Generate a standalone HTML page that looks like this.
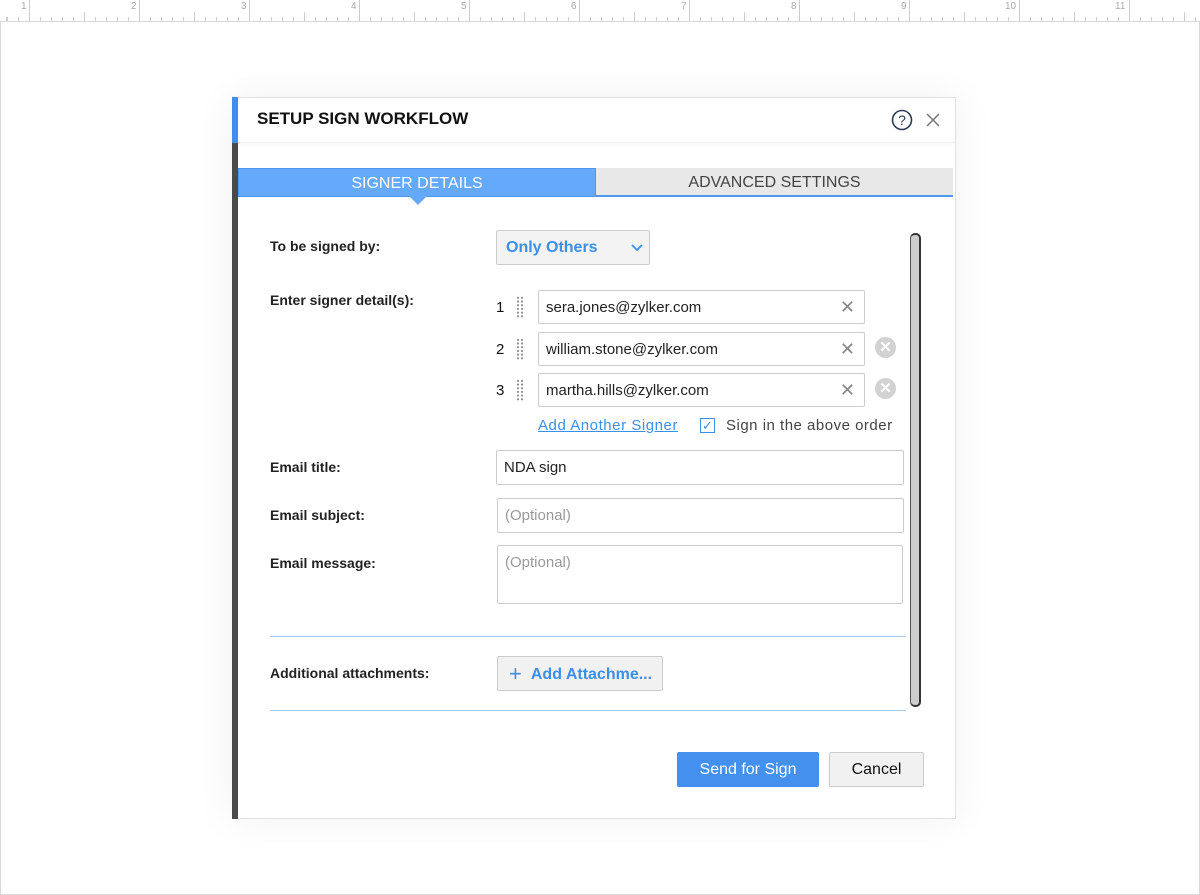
<!DOCTYPE html>
<html><head><style>
*{box-sizing:border-box;margin:0;padding:0}
body{width:1200px;height:895px;background:#fff;font-family:"Liberation Sans",sans-serif;position:relative;overflow:hidden}
.ruler{position:absolute;left:0;top:0;width:1200px;height:22px;background:#fff;border-bottom:1px solid #d8d8d8;
background-image:repeating-linear-gradient(90deg,#ccc 0 1px,transparent 1px 110px),
repeating-linear-gradient(90deg,#ccc 0 1px,transparent 1px 11px),
repeating-linear-gradient(90deg,#ccc 0 1px,transparent 1px 55px);
background-size:100% 22px,100% 5px,100% 10px;background-position:29px 0,7px 17px,29px 12px;background-repeat:repeat-x}
.rn{position:absolute;top:1px;font-size:10px;color:#aaa}
.frame{position:absolute;left:0;top:22px;width:1200px;height:873px;border:1px solid #d8d8d8;border-top:none}
.dlg{position:absolute;left:232px;top:97px;width:724px;height:722px;background:#fff;border:1px solid #e2e2e2;box-shadow:0 0 40px rgba(0,0,0,.06)}
.bar{position:absolute;left:232px;top:97px;width:6px;height:722px;background:#4a4a4a}
.bar:before{content:"";position:absolute;left:0;top:0;width:6px;height:46px;background:#3d8ef0}
.hdr{position:absolute;left:238px;top:97px;width:717px;height:46px;border-bottom:1px solid #eee;box-shadow:0 2px 4px rgba(0,0,0,.03)}
.title{position:absolute;left:257px;top:109px;font-size:17px;font-weight:bold;color:#111}
.tab{position:absolute;top:168px;height:29px;font-size:16px;text-align:center;line-height:29px}
.lbl{position:absolute;left:270px;font-size:14px;font-weight:bold;color:#222}
.inp{position:absolute;border:1px solid #ccc;border-radius:2px;background:#fff;font-size:15px;color:#222;padding-left:7px;line-height:33px}
.x{position:absolute;right:9px;top:0;color:#888;font-size:18px}
.num{position:absolute;left:496px;font-size:15px;color:#111}
.dots{position:absolute;left:516px;width:8px;height:22px;background-image:radial-gradient(circle,#888 0.9px,transparent 1.2px);background-size:4px 3.7px}
.rm{position:absolute;left:875px;width:21px;height:21px;border-radius:50%;background:#d2d2d2;color:#fff;text-align:center;line-height:22px;font-size:15px;font-weight:bold}
.hr{position:absolute;left:270px;width:636px;height:1px;background:#a9cbf3}
.btn{position:absolute;border-radius:2px;font-size:16px;text-align:center}
</style></head><body>
<div class="ruler"></div>
<span class="rn" style="left:21px">1</span><span class="rn" style="left:131px">2</span><span class="rn" style="left:241px">3</span><span class="rn" style="left:351px">4</span><span class="rn" style="left:461px">5</span><span class="rn" style="left:571px">6</span><span class="rn" style="left:681px">7</span><span class="rn" style="left:791px">8</span><span class="rn" style="left:901px">9</span><span class="rn" style="left:1005px">10</span><span class="rn" style="left:1115px">11</span>
<div class="frame"></div>
<div class="dlg"></div>
<div class="hdr"></div>
<div class="bar"></div>
<div class="title">SETUP SIGN WORKFLOW</div>
<svg style="position:absolute;left:890px;top:108px" width="24" height="24" viewBox="0 0 24 24"><circle cx="12" cy="12" r="9.5" fill="none" stroke="#2b3a55" stroke-width="1.6"/><text x="12" y="17" text-anchor="middle" font-size="14" font-family="Liberation Sans" fill="#2b3a55">?</text></svg>
<svg style="position:absolute;left:926px;top:113px" width="14" height="14"><path d="M1 1L13 13M13 1L1 13" stroke="#777" stroke-width="1.5"/></svg>
<div class="tab" style="left:238px;width:358px;background:#64a9fa;color:#fff;border:1px solid #4d97ef">SIGNER DETAILS</div>
<div class="tab" style="left:596px;width:357px;background:#e8e8e8;color:#444;border-bottom:2px solid #4d97ef">ADVANCED SETTINGS</div>
<div style="position:absolute;left:409px;top:196px;width:0;height:0;border-left:9px solid transparent;border-right:9px solid transparent;border-top:9px solid #64a9fa"></div>
<div style="position:absolute;left:910px;top:233px;width:11px;height:474px;background:#cdcdcd;border:2px solid #333;border-radius:5px;border-left:1px solid #555"></div>

<div class="lbl" style="top:238px">To be signed by:</div>
<div class="inp" style="left:496px;top:230px;width:154px;height:35px;background:#f3f3f3;color:#3b8fe8;font-weight:bold;font-size:16px;padding-left:9px;line-height:34px">Only Others
<svg style="position:absolute;right:6px;top:13px" width="12" height="8"><path d="M1 1L6 6L11 1" stroke="#3b8fe8" stroke-width="1.8" fill="none"/></svg></div>

<div class="lbl" style="top:292px">Enter signer detail(s):</div>
<div class="num" style="top:299px">1</div><div class="dots" style="top:296px"></div>
<div class="inp" style="left:538px;top:290px;width:327px;height:34px">sera.jones@zylker.com<span class="x">✕</span></div>
<div class="num" style="top:341px">2</div><div class="dots" style="top:338px"></div>
<div class="inp" style="left:538px;top:332px;width:327px;height:34px">william.stone@zylker.com<span class="x">✕</span></div>
<div class="rm" style="top:337px">✕</div>
<div class="num" style="top:382px">3</div><div class="dots" style="top:379px"></div>
<div class="inp" style="left:538px;top:373px;width:327px;height:34px">martha.hills@zylker.com<span class="x">✕</span></div>
<div class="rm" style="top:378px">✕</div>
<div style="position:absolute;left:538px;top:417px;font-size:15px;color:#3b8fe8;text-decoration:underline;letter-spacing:0.55px">Add Another Signer</div>
<div style="position:absolute;left:700px;top:418px;width:15px;height:15px;border:1px solid #3b8fe8;color:#3b8fe8;font-size:13px;line-height:13px;text-align:center">✓</div>
<div style="position:absolute;left:726px;top:417px;font-size:15px;color:#444;letter-spacing:0.5px">Sign in the above order</div>

<div class="lbl" style="top:459px">Email title:</div>
<div class="inp" style="left:496px;top:450px;width:408px;height:35px;line-height:34px">NDA sign</div>
<div class="lbl" style="top:507px">Email subject:</div>
<div class="inp" style="left:497px;top:498px;width:407px;height:35px;color:#999;line-height:34px">(Optional)</div>
<div class="lbl" style="top:555px">Email message:</div>
<div class="inp" style="left:497px;top:545px;width:406px;height:59px;color:#999">(Optional)</div>

<div class="hr" style="top:636px"></div>
<div class="lbl" style="top:665px">Additional attachments:</div>
<div class="btn" style="left:497px;top:656px;width:166px;height:35px;background:#f1f1f1;border:1px solid #ccc;color:#3b8fe8;font-weight:bold;line-height:33px;text-align:left;padding-left:11px;white-space:nowrap"><span style="font-size:22px;font-weight:normal;vertical-align:-2px;margin-right:9px">+</span>Add Attachme...</div>
<div class="hr" style="top:710px"></div>

<div class="btn" style="left:677px;top:752px;width:142px;height:35px;background:#4390ee;color:#fff;line-height:35px">Send for Sign</div>
<div class="btn" style="left:829px;top:752px;width:95px;height:35px;background:#f1f1f1;border:1px solid #ccc;color:#111;line-height:33px">Cancel</div>
</body></html>
